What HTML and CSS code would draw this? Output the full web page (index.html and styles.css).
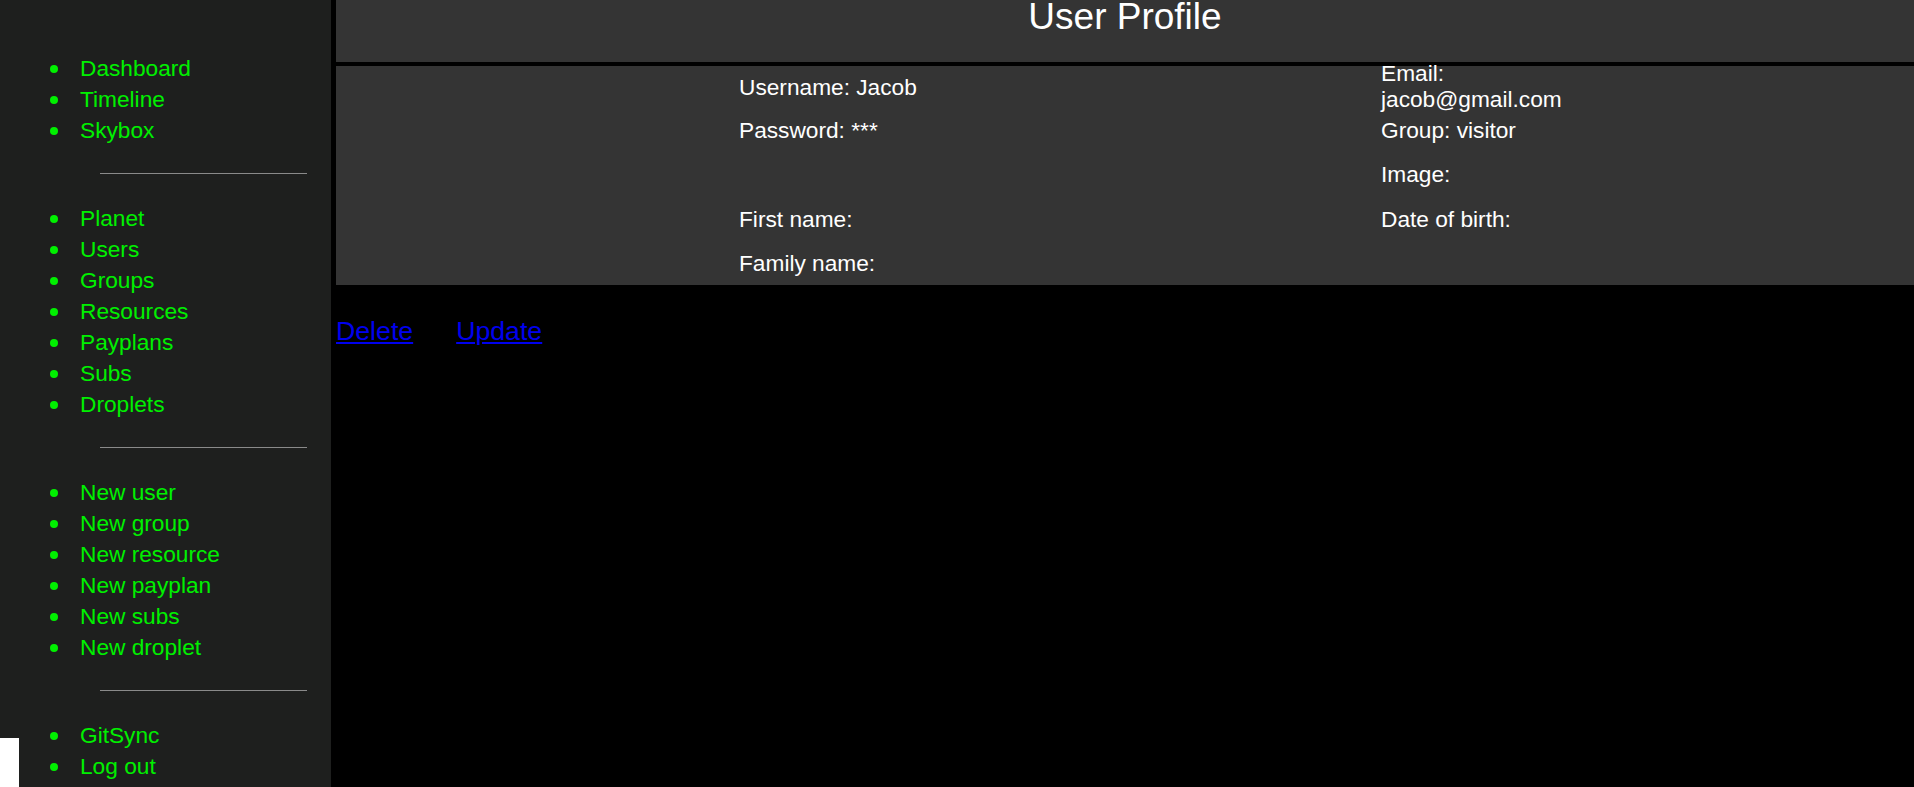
FILE: index.html
```html
<!DOCTYPE html>
<html lang="en">
<head>
<meta charset="utf-8">
<title>User Profile</title>
<link rel="stylesheet" href="styles.css">
</head>
<body>
<div class="layout">
  <nav class="sidebar">
    <ul class="menu">
      <li><a href="#">Dashboard</a></li>
      <li><a href="#">Timeline</a></li>
      <li><a href="#">Skybox</a></li>
    </ul>
    <hr class="sep">
    <ul class="menu">
      <li><a href="#">Planet</a></li>
      <li><a href="#">Users</a></li>
      <li><a href="#">Groups</a></li>
      <li><a href="#">Resources</a></li>
      <li><a href="#">Payplans</a></li>
      <li><a href="#">Subs</a></li>
      <li><a href="#">Droplets</a></li>
    </ul>
    <hr class="sep">
    <ul class="menu">
      <li><a href="#">New user</a></li>
      <li><a href="#">New group</a></li>
      <li><a href="#">New resource</a></li>
      <li><a href="#">New payplan</a></li>
      <li><a href="#">New subs</a></li>
      <li><a href="#">New droplet</a></li>
    </ul>
    <hr class="sep">
    <ul class="menu">
      <li><a href="#">GitSync</a></li>
      <li><a href="#">Log out</a></li>
    </ul>
    <div class="notch"></div>
  </nav>
  <main class="main">
    <header class="header">
      <h1 class="title">User Profile</h1>
    </header>
    <section class="info">
      <div class="cell">Username: Jacob</div>
      <div class="cell email">Email:<br>jacob@gmail.com</div>
      <div class="cell">Password: ***</div>
      <div class="cell">Group: visitor</div>
      <div class="cell"></div>
      <div class="cell">Image:</div>
      <div class="cell">First name:</div>
      <div class="cell">Date of birth:</div>
      <div class="cell">Family name:</div>
      <div class="cell"></div>
    </section>
    <div class="actions">
      <a href="#" class="action">Delete</a>
      <a href="#" class="action">Update</a>
    </div>
  </main>
</div>
</body>
</html>
```

FILE: styles.css
```css
html, body {
  margin: 0;
  padding: 0;
  background: #ffffff;
}

body {
  font-family: "Liberation Sans", Arial, sans-serif;
}

.layout {
  display: flex;
  height: 787px;
  overflow: hidden;
}

.sidebar {
  position: relative;
  width: 331px;
  flex: none;
  background: #1e1f1e;
  padding-top: 53px;
  box-sizing: border-box;
}

.menu {
  list-style: none;
  margin: 0;
  padding: 0 0 0 80px;
}

.menu li {
  position: relative;
  font-size: 22.7px;
  line-height: 31px;
}

.menu li::before {
  content: "";
  position: absolute;
  left: -30px;
  top: 12px;
  width: 8px;
  height: 8px;
  border-radius: 50%;
  background: #00f000;
}

.menu a {
  color: #00f000;
  text-decoration: none;
}

.sep {
  border: 0;
  height: 1px;
  background: #8a8a8a;
  margin: 27px 24px 29px 100px;
}

.notch {
  position: absolute;
  left: 0;
  bottom: 0;
  width: 19px;
  height: 49px;
  background: #ffffff;
}

.main {
  flex: 1;
  background: #000000;
  padding-left: 5px;
  min-width: 0;
}

.header {
  height: 62px;
  background: #343434;
  margin-bottom: 4px;
}

.title {
  margin: 0;
  font-size: 37px;
  font-weight: normal;
  line-height: 33px;
  color: #ffffff;
  text-align: center;
}

.info {
  display: grid;
  grid-template-columns: 642px 210px;
  grid-template-rows: 42px 44px 44px 45px 44px;
  align-items: center;
  height: 219px;
  padding-left: 403px;
  background: #343434;
  color: #ffffff;
  font-size: 22.7px;
}

.cell {
  line-height: 26px;
}

.email {
  align-self: start;
  margin-top: -6px;
}

.actions {
  display: flex;
  gap: 43px;
  padding-top: 31px;
}

.action {
  font-size: 26.7px;
  color: #0000ee;
  text-decoration: underline;
}
```
